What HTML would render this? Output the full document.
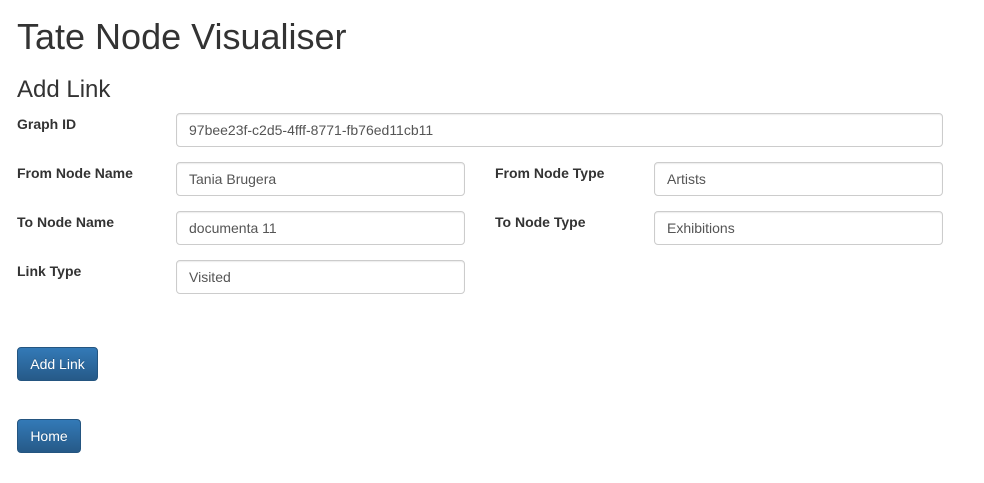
<!DOCTYPE html>
<html><head><style>
body{margin:0;background:#fff;font-family:"Liberation Sans",Arial,sans-serif;color:#333;width:984px;height:483px;position:relative;overflow:hidden}
.a{position:absolute}
h1{position:absolute;left:17px;top:14px;margin:0;font-size:36px;font-weight:500;line-height:46px}
h3{position:absolute;left:17px;top:75px;margin:0;font-size:24px;font-weight:500;line-height:30px}
label{position:absolute;font-weight:bold;font-size:14px;line-height:20px}
.in{position:absolute;height:32px;border:1px solid #ccc;border-radius:4px;box-shadow:inset 0 1px 1px rgba(0,0,0,.075);font-size:14px;line-height:32px;padding-left:12px;box-sizing:content-box;color:#555}
.btn{position:absolute;left:17px;height:32px;border:1px solid #245580;border-radius:4px;background:linear-gradient(#337ab7,#265a88);color:#fff;font-size:14px;line-height:32px;text-align:center;text-shadow:0 -1px 0 rgba(0,0,0,.2)}
</style></head><body>
<h1>Tate Node Visualiser</h1>
<h3>Add Link</h3>
<label style="left:17px;top:114px">Graph ID</label>
<div class="in" style="left:176px;top:113px;width:753px">97bee23f-c2d5-4fff-8771-fb76ed11cb11</div>
<label style="left:17px;top:163px">From Node Name</label>
<div class="in" style="left:176px;top:162px;width:275px">Tania Brugera</div>
<label style="left:495px;top:163px">From Node Type</label>
<div class="in" style="left:654px;top:162px;width:275px">Artists</div>
<label style="left:17px;top:212px">To Node Name</label>
<div class="in" style="left:176px;top:211px;width:275px">documenta 11</div>
<label style="left:495px;top:212px">To Node Type</label>
<div class="in" style="left:654px;top:211px;width:275px">Exhibitions</div>
<label style="left:17px;top:261px">Link Type</label>
<div class="in" style="left:176px;top:260px;width:275px">Visited</div>
<div class="btn" style="top:347px;width:79px">Add Link</div>
<div class="btn" style="top:419px;width:62px">Home</div>
</body></html>
